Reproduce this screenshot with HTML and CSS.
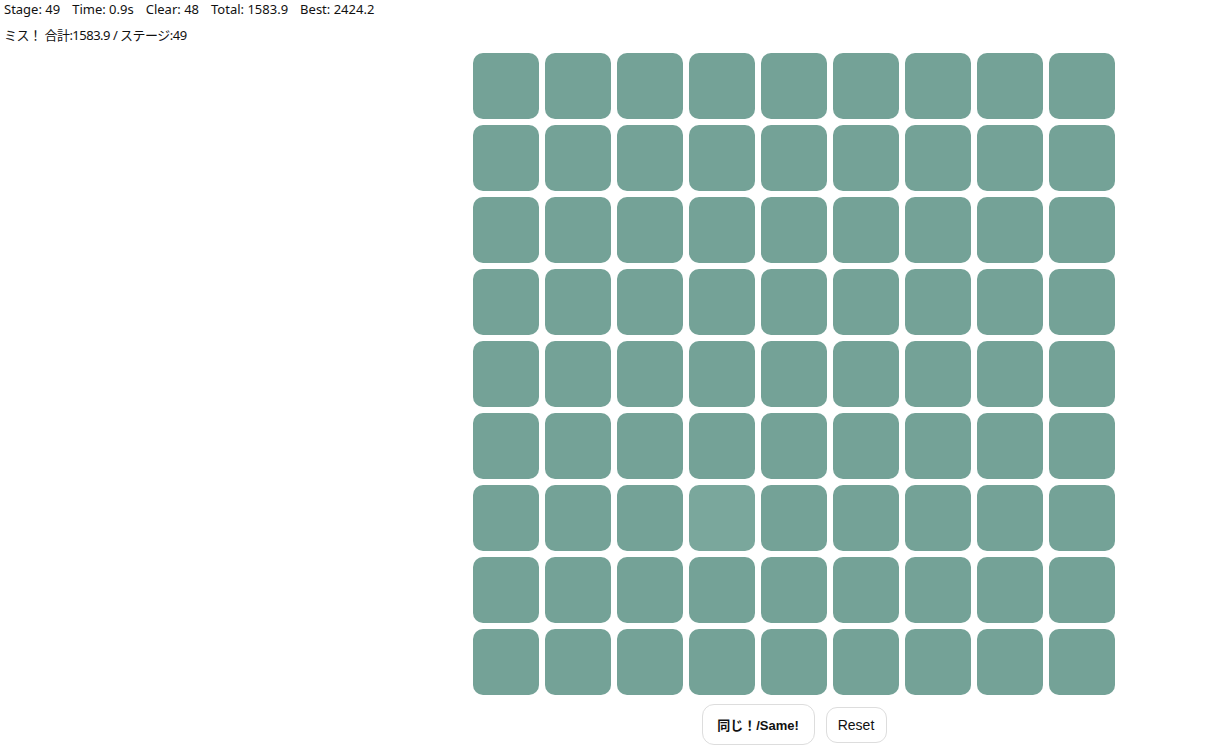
FILE: index.html
```html
<!DOCTYPE html>
<html lang="ja">
<head>
<meta charset="utf-8">
<title>同じ！/Same!</title>
<link rel="stylesheet" href="styles.css">
</head>
<body>
<div class="hud">
  <span>Stage: 49</span>
  <span>Time: 0.9s</span>
  <span>Clear: 48</span>
  <span>Total: 1583.9</span>
  <span>Best: 2424.2</span>
</div>
<div class="msg">ミス！ 合計:1583.9 / ステージ:49</div>
<div class="stage">
  <div class="grid">
    <div class="tile"></div><div class="tile"></div><div class="tile"></div><div class="tile"></div><div class="tile"></div><div class="tile"></div><div class="tile"></div><div class="tile"></div><div class="tile"></div>
    <div class="tile"></div><div class="tile"></div><div class="tile"></div><div class="tile"></div><div class="tile"></div><div class="tile"></div><div class="tile"></div><div class="tile"></div><div class="tile"></div>
    <div class="tile"></div><div class="tile"></div><div class="tile"></div><div class="tile"></div><div class="tile"></div><div class="tile"></div><div class="tile"></div><div class="tile"></div><div class="tile"></div>
    <div class="tile"></div><div class="tile"></div><div class="tile"></div><div class="tile"></div><div class="tile"></div><div class="tile"></div><div class="tile"></div><div class="tile"></div><div class="tile"></div>
    <div class="tile"></div><div class="tile"></div><div class="tile"></div><div class="tile"></div><div class="tile"></div><div class="tile"></div><div class="tile"></div><div class="tile"></div><div class="tile"></div>
    <div class="tile"></div><div class="tile"></div><div class="tile"></div><div class="tile"></div><div class="tile"></div><div class="tile"></div><div class="tile"></div><div class="tile"></div><div class="tile"></div>
    <div class="tile"></div><div class="tile"></div><div class="tile"></div><div class="tile odd"></div><div class="tile"></div><div class="tile"></div><div class="tile"></div><div class="tile"></div><div class="tile"></div>
    <div class="tile"></div><div class="tile"></div><div class="tile"></div><div class="tile"></div><div class="tile"></div><div class="tile"></div><div class="tile"></div><div class="tile"></div><div class="tile"></div>
    <div class="tile"></div><div class="tile"></div><div class="tile"></div><div class="tile"></div><div class="tile"></div><div class="tile"></div><div class="tile"></div><div class="tile"></div><div class="tile"></div>
  </div>
  <div class="controls">
    <button class="btn btn-same">同じ！/Same!</button>
    <button class="btn btn-reset">Reset</button>
  </div>
</div>
</body>
</html>
```
FILE: styles.css
```css
html, body {
  margin: 0;
  padding: 0;
  background: #ffffff;
}
body {
  font-family: "Noto Sans", "Noto Sans CJK JP", sans-serif;
  font-size: 13px;
  color: #111111;
}
.hud {
  display: flex;
  gap: 12px;
  padding: 0 4px;
  height: 20px;
  line-height: 18px;
}
.msg {
  padding: 0 4px;
  height: 30px;
  line-height: 30px;
  letter-spacing: -0.5px;
}
.stage {
  margin-left: 473px;
  margin-top: 3px;
  width: 642px;
  display: flex;
  flex-direction: column;
  align-items: center;
}
.grid {
  display: grid;
  grid-template-columns: repeat(9, 66px);
  grid-auto-rows: 66px;
  gap: 6px;
}
.tile {
  background: #74a297;
  border-radius: 10px;
}
.tile.odd {
  background: #7aa79c;
}
.controls {
  margin-top: 9px;
  display: flex;
  align-items: center;
  gap: 11px;
}
.btn {
  background: #ffffff;
  border: 1px solid #dddddd;
  color: #111111;
  font-family: "Liberation Sans", "Noto Sans CJK JP", sans-serif;
  font-size: 14px;
  cursor: pointer;
  padding: 0;
}
.btn-same {
  width: 113px;
  height: 41px;
  border-radius: 12px;
  font-weight: bold;
  font-size: 13px;
}
.btn-reset {
  width: 61px;
  height: 36px;
  border-radius: 11px;
}
```
